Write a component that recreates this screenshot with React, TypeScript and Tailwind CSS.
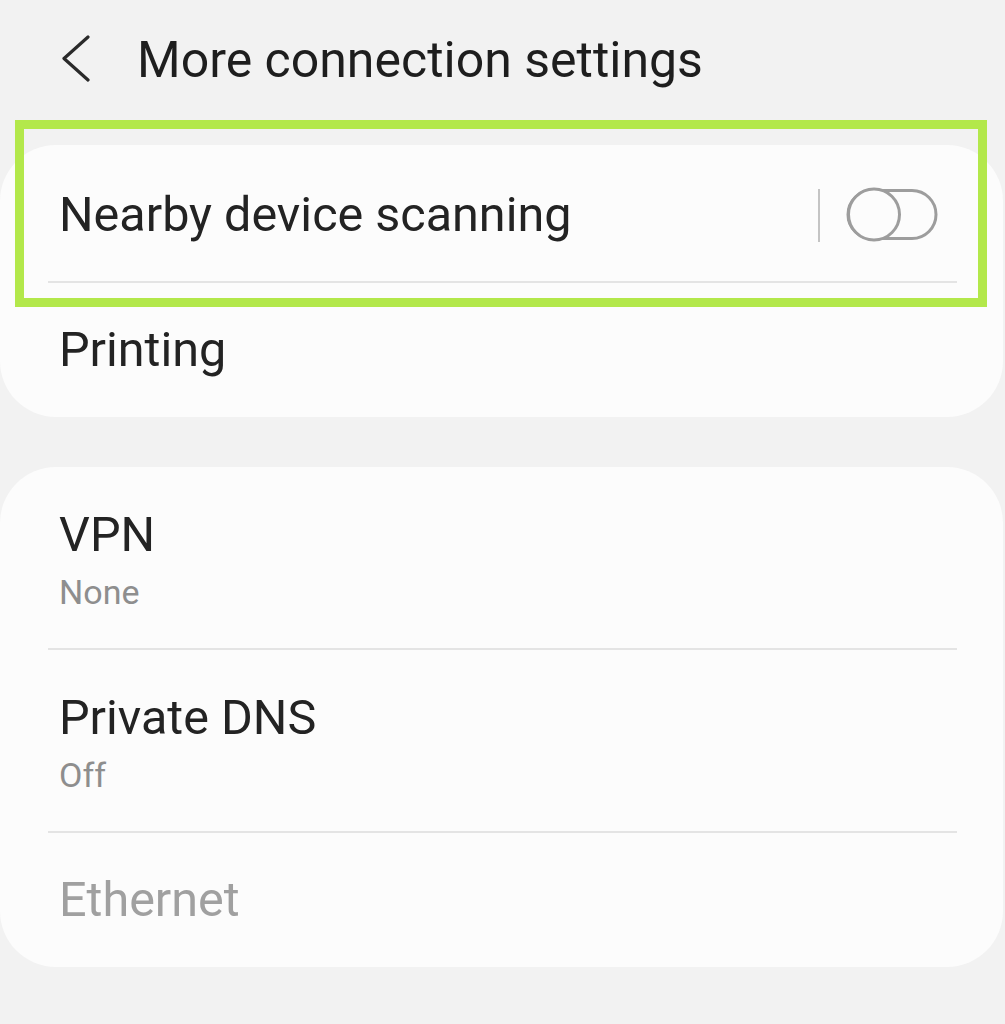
import React from "react";

const font = { fontFamily: "Roboto, 'Noto Sans', Arial, sans-serif" };

function Toggle() {
  return (
    <svg width="94" height="58" viewBox="0 0 94 58" className="block">
      <rect x="2" y="4.5" width="88" height="48" rx="24" fill="none" stroke="#9d9d9d" strokeWidth="3" />
      <circle cx="28" cy="28.5" r="25.5" fill="#fcfcfc" stroke="#9d9d9d" strokeWidth="3" />
    </svg>
  );
}

export default function App() {
  return (
    <div className="relative w-[1005px] h-[1024px] bg-[#f2f2f2] overflow-hidden" style={font}>
      {/* Header */}
      <div className="flex items-start pt-[30px] h-[145px]">
        <div className="flex items-center pl-[61px]">
          <svg width="30" height="48" viewBox="0 0 30 48" className="block -mt-[2px]">
            <polyline points="27,2 3,23.5 27,45" fill="none" stroke="#2a2a2a" strokeWidth="3.2" strokeLinecap="round" strokeLinejoin="round" />
          </svg>
          <div className="ml-[46px] text-[50px] leading-[60px] text-[#1e1e1e]">
            More connection settings
          </div>
        </div>
      </div>

      {/* Card 1 */}
      <div className="w-[1003px] bg-[#fcfcfc] rounded-[56px]">
        <div className="flex items-center pl-[59px] pr-[63px] pt-[41px] pb-[37px]">
          <div className="flex-1 text-[48.5px] leading-[58px] text-[#232323]">Nearby device scanning</div>
          <div className="w-[2px] h-[53px] bg-[#c4c4c4] mr-[26px]" />
          <Toggle />
        </div>
        <div className="ml-[48px] mr-[46px] h-[2px] bg-[#e4e4e4]" />
        <div className="pl-[59px] pt-[38px] pb-[38px] text-[48.5px] leading-[58px] text-[#232323]">Printing</div>
      </div>

      {/* Card 2 */}
      <div className="mt-[50px] w-[1003px] bg-[#fcfcfc] rounded-[56px]">
        <div className="pl-[59px] pt-[39px] pb-[36px]">
          <div className="text-[48.5px] leading-[58px] text-[#232323]">VPN</div>
          <div className="mt-[8px] text-[34px] leading-[40px] text-[#8e8e8e]">None</div>
        </div>
        <div className="ml-[48px] mr-[46px] h-[2px] bg-[#e4e4e4]" />
        <div className="pl-[59px] pt-[39px] pb-[36px]">
          <div className="text-[48.5px] leading-[58px] text-[#232323]">Private DNS</div>
          <div className="mt-[8px] text-[34px] leading-[40px] text-[#8e8e8e]">Off</div>
        </div>
        <div className="ml-[48px] mr-[46px] h-[2px] bg-[#e4e4e4]" />
        <div className="pl-[59px] pt-[38px] pb-[38px] text-[48.5px] leading-[58px] text-[#a0a0a0]">Ethernet</div>
      </div>

      {/* Highlight annotation */}
      <div className="absolute left-[15px] top-[120px] w-[972px] h-[187px] border-[9px] border-[#b3e84b] pointer-events-none" />
    </div>
  );
}
